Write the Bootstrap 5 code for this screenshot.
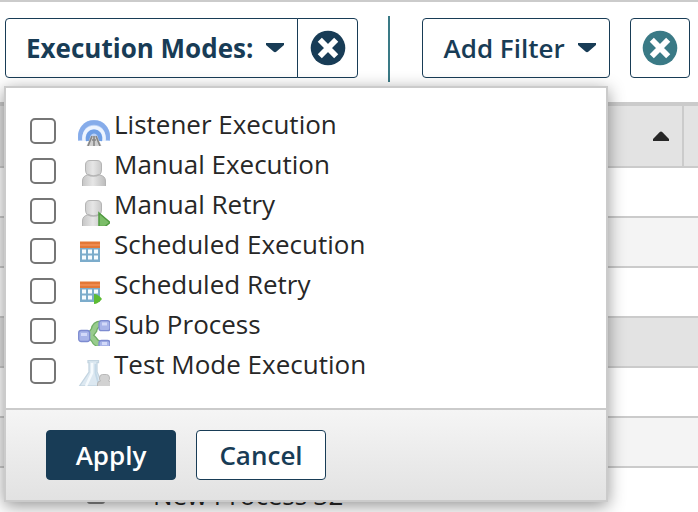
<!DOCTYPE html>
<html lang="en">
<head>
<meta charset="utf-8">
<meta name="viewport" content="width=device-width, initial-scale=1">
<title>Execution filters</title>
<link href="https://cdn.jsdelivr.net/npm/bootstrap@5.3.0/dist/css/bootstrap.min.css" rel="stylesheet">
<style>
  :root { --navy: #183c56; --teal: #3a7a86; --rule: #cbcbcb; }
  body { font-family: "Open Sans", "Noto Sans", sans-serif; font-size: 26px; line-height: 40px; color: #272727; height: 512px; }
  .filter-bar { height: 102px; padding: 16px 8px 0 5px; border-top: 2px solid var(--rule); }
  .btn-filter { --bs-btn-color: var(--navy); --bs-btn-bg: #fff; --bs-btn-border-color: var(--navy); --bs-btn-hover-color: #fff; --bs-btn-hover-bg: var(--navy);
    --bs-btn-border-radius: 4px; --bs-btn-padding-x: 0; --bs-btn-padding-y: 0; --bs-btn-font-size: 26px; --bs-btn-line-height: 40px; --bs-btn-font-weight: 600; height: 60px; }
  .btn-modes { width: 293px; padding-left: 20px; font-weight: 700; }
  .btn-clear { width: 61px; }
  .btn-add { width: 188px; padding-left: 20.500px; }
  .btn-reset { width: 60px; color: var(--teal); margin-left: 20px; padding-right: 1px; }
  .divider { width: 2px; height: 66px; background: var(--teal); margin: -2px 32px 0 30px; }
  .arrow { width: 18px; height: 10px; margin-left: 13px; }
  .grid-head { height: 66px; background: #e3e3e3; border-top: 4px solid var(--rule); border-bottom: 2px solid var(--rule); }
  .grid-cell { width: 684px; border-right: 2px solid var(--rule); padding-right: 13px; }
  .grid-row { height: 50px; border-bottom: 2px solid var(--rule); }
  .grid-row.alt { background: #f4f4f4; }
  .grid-row.picked { background: #e3e3e3; }
  .process { padding-left: 86px; height: 53px; }
  .process span { margin-left: 45px; letter-spacing: -.08px; }
  .mode-menu { left: 4px; top: 86px; width: 604px; height: 416px; border: 2px solid var(--rule); box-shadow: 0 4px 16px rgba(0,0,0,.42); }
  .mode-list { height: 320px; padding: 16px 24px 0; }
  .mode { height: 40px; }
  .mode .form-check-input { width: 26px; height: 26px; border: 2px solid #767676; border-radius: 5px; margin: 14px 22px 0 0; }
  .mode svg { width: 32px; height: 26px; margin: 16px 4px 0 0; flex: none; }
  .menu-foot { height: 92px; border-top: 2px solid var(--rule); background: linear-gradient(#f5f5f5,#e2e2e2); padding: 20px 40px; gap: 20px; }
  .menu-foot .btn { width: 130px; height: 50px; }
  .btn-apply { --bs-btn-color: #fff; --bs-btn-bg: var(--navy); }
</style>
<script src="https://cdn.jsdelivr.net/npm/bootstrap@5.3.0/dist/js/bootstrap.bundle.min.js"></script>
</head>
<body class="bg-white overflow-hidden position-relative">
<header class="filter-bar d-flex align-items-start">
  <div class="btn-group">
    <button class="btn btn-filter btn-modes d-flex align-items-center">Execution Modes:<svg class="arrow" viewBox="0 0 18 10" fill="currentColor"><path d="M0 0h18v2L10.500 8.500Q9 10 7.500 8.500L0 2z"/></svg></button>
    <button class="btn btn-filter btn-clear d-flex align-items-center justify-content-center" aria-label="Clear"><svg width="36" height="36" viewBox="0 0 36 36"><circle cx="18" cy="18" r="17.300" fill="currentColor"/><path d="M9.800 9.800l16.400 16.400m0-16.400L9.800 26.200" stroke="#fff" stroke-width="5.800"/></svg></button>
  </div>
  <div class="divider"></div>
  <button class="btn btn-filter btn-add d-flex align-items-center">Add Filter<svg class="arrow" viewBox="0 0 18 10" fill="currentColor"><path d="M0 0h18v2L10.500 8.500Q9 10 7.500 8.500L0 2z"/></svg></button>
  <button class="btn btn-filter btn-reset d-flex align-items-center justify-content-center" aria-label="Reset"><svg width="36" height="36" viewBox="0 0 36 36"><circle cx="18" cy="18" r="17.300" fill="currentColor"/><path d="M9.800 9.800l16.400 16.400m0-16.400L9.800 26.200" stroke="#fff" stroke-width="5.800"/></svg></button>
</header>
<main>
  <div class="grid-head d-flex"><div class="grid-cell d-flex align-items-center justify-content-end"><svg width="16" height="10" viewBox="0 0 16 10" fill="#272727"><path d="M0 10V8L6.800 1Q8 0 9.200 1L16 8v2z"/></svg></div></div>
  <div class="grid-row"></div>
  <div class="grid-row alt"></div>
  <div class="grid-row"></div>
  <div class="grid-row picked"></div>
  <div class="grid-row"></div>
  <div class="grid-row alt"></div>
  <div class="process d-flex align-items-center"><svg width="22" height="18" viewBox="0 0 22 18"><rect x="1" width="18" height="18" rx="3" fill="#888"/></svg><span>New Process 32</span></div>
</main>
<section class="mode-menu position-absolute bg-white">
  <div class="mode-list">
    <label class="mode d-flex"><input class="form-check-input" type="checkbox">
      <svg viewBox="0 0 32 26"><path d="M0 21v-7C2 4 9 0 16 0s14 4 16 14v7z" fill="#b9d0f5"/><path d="M2.500 20C1 9 8 2.500 16 2.500S31 9 29.500 20" fill="none" stroke="#86acea" stroke-width="4.500"/><path d="M6 21C5 12 10 7.500 16 7.500S27 12 26 21" fill="none" stroke="#edf4ff" stroke-width="3.500"/><path d="M10 21C9 15 12 11.500 16 11.500s7 3.500 6 9.500" fill="none" stroke="#6e9ee5" stroke-width="4"/><path d="M13 16h6l4.500 10h-15z" fill="#cfcfcf"/><path d="M14 16l-4 10m8-10l4 10m-8-6h4m-2-4v10" stroke="#858585" stroke-width="1.600" fill="none"/></svg>Listener Execution</label>
    <label class="mode d-flex"><input class="form-check-input" type="checkbox">
      <svg viewBox="0 0 32 26"><use href="#person"/></svg>Manual Execution</label>
    <label class="mode d-flex"><input class="form-check-input" type="checkbox">
      <svg viewBox="0 0 32 26"><use href="#person"/><path d="M21 13l11 9.500-5 4h-6z" fill="#7bbd68" stroke="#509a40" stroke-width="1.500"/></svg>Manual Retry</label>
    <label class="mode d-flex"><input class="form-check-input" type="checkbox">
      <svg viewBox="0 0 32 26"><use href="#calendar"/></svg>Scheduled Execution</label>
    <label class="mode d-flex"><input class="form-check-input" type="checkbox">
      <svg viewBox="0 0 32 26"><use href="#calendar"/><path d="M16 14q4 0 8 5-4 5-8 5z" fill="#5dbb33"/></svg>Scheduled Retry</label>
    <label class="mode d-flex"><input class="form-check-input" type="checkbox">
      <svg viewBox="0 0 32 26"><path d="M23 4Q17 4 16 10L12 15.500l4 4Q18 24 23 24" fill="none" stroke="#6fae65" stroke-width="7"/><path d="M23 4Q17 4 16 10L12 15.500l4 4Q18 24 23 24" fill="none" stroke="#98cc8c" stroke-width="4.500"/><g fill="#a9b5e9" stroke="#7d8bd0" stroke-width="1.300"><rect x="21" y=".7" width="11" height="10" rx="2.500"/><rect x=".7" y="10.500" width="11" height="11" rx="2.500"/><rect x="21" y="20.500" width="11" height="9" rx="2.500"/></g><path d="M24 4h5M3 14.500h6m15 9h5" stroke="#d3daf9" stroke-width="3"/></svg>Sub Process</label>
    <label class="mode d-flex"><input class="form-check-input" type="checkbox">
      <svg viewBox="0 0 32 26"><path d="M10 .7h10.500v2H19v9L25 26H1.500L11 12V2.700h-1z" fill="#dce8f1" stroke="#c4d5e1" stroke-width="1.300"/><path d="M14 3v10L8 26" fill="none" stroke="#f5fafd" stroke-width="2.500"/><path d="M17.500 4v9l3 11" fill="none" stroke="#c3d8e7" stroke-width="1.800"/><path d="M19.500 27v-3q0-3 3-3-1-1-1-3 0-3.500 3-3.500h4q3 0 3 3.500 0 2-1 3 3 0 3 3v3z" fill="#d2d2d2" stroke="#b8b8b8"/></svg>Test Mode Execution</label>
  </div>
  <footer class="menu-foot d-flex"><button class="btn btn-filter btn-apply">Apply</button><button class="btn btn-filter">Cancel</button></footer>
</section>
<svg width="0" height="0" class="position-absolute" aria-hidden="true">
  <defs><linearGradient id="silver"><stop stop-color="#c6c6c6"/><stop offset=".45" stop-color="#e6e6e6"/><stop offset="1" stop-color="#bcbcbc"/></linearGradient></defs>
  <symbol id="person" viewBox="0 0 32 26" width="32" height="26"><path d="M4.500 27v-6q0-5 5-6-2-2-2-5V5q0-4.500 4.500-4.500h7q4.500 0 4.500 4.500v5q0 3-2 5 6 1 6 6v6z" fill="url(#silver)" stroke="#b4b4b4"/><path d="M9.500 14.500q6 3 12 0" fill="none" stroke="#b5b5b5" stroke-width="1.500"/></symbol>
  <symbol id="calendar" viewBox="0 0 32 26" width="32" height="26"><path d="M2 2h20v20H2z" fill="#7caccb"/><path d="M2 1.500h20V8H2z" fill="#e27838"/><path d="M2 4h20v2H2z" fill="#ee8a50"/><path d="M4 9.500h4v4H4zm6 0h4v4h-4zm6 0h4v4h-4zM4 15.500h4v4H4zm6 0h4v4h-4zm6 0h4v4h-4z" fill="#f8fcff"/></symbol>
</svg>
</body>
</html>
